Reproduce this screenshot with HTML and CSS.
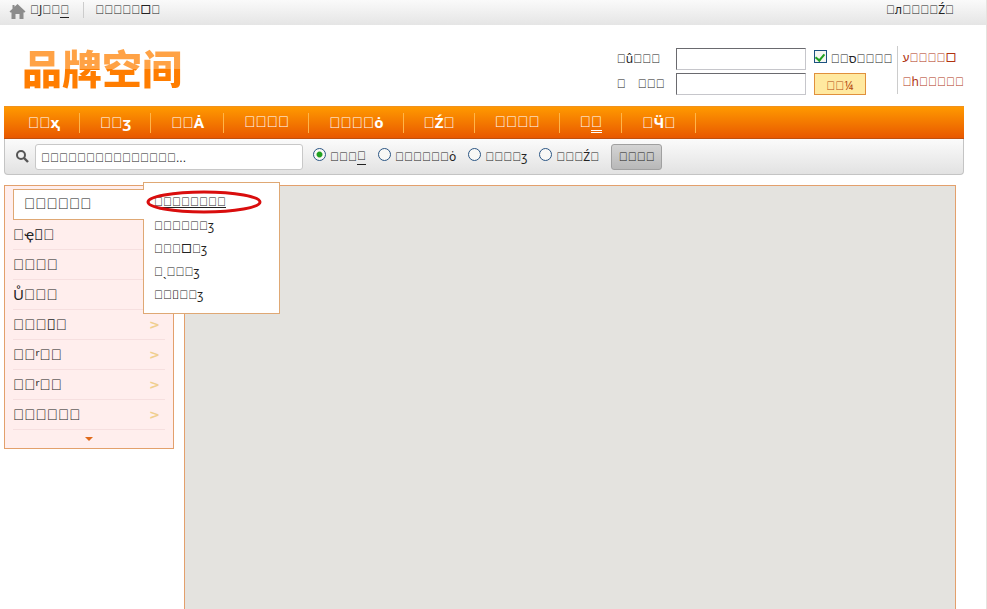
FILE: index.html
```
<!DOCTYPE html>
<html lang="en">
<head>
    <meta charset="UTF-8">
    <meta name="viewport" content="width=device-width, initial-scale=1.0">
    <title>品牌空间</title>
    <link rel="stylesheet" href="styles.css">
</head>
<body>
    <div class="topbar">
        <svg class="home" viewBox="0 0 16 15" aria-hidden="true">
            <path d="M8 0 16 7.5 15 8.5H14V15H10V10H6V15H2V8.5H1L0 7.5 3 4.7V1H5V2.8Z" fill="#8c8c8c"/>
        </svg>
        <a href="#" class="top-first">&#xE5E5;<span class="lt">J</span>&#xE5E5;&#xE5E5;<span class="low">&#xE5E5;</span></a>
        <a href="#">&#xE5E5;&#xE5E5;&#xE5E5;&#xE5E5;&#xE5E5;<span class="wide">□</span>&#xE5E5;</a>
        <a href="#" class="top-last">&#xE5E5;<span class="lt">л</span>&#xE5E5;&#xE5E5;&#xE5E5;&#xE5E5;<span class="lt">Ź</span>&#xE5E5;</a>
    </div>

    <header class="header">
        <h1 class="logo" lang="zh">品牌空间</h1>
        <form class="login">
            <label for="user">&#xE5E5;<span class="lt">û</span>&#xE5E5;&#xE5E5;&#xE5E5;</label>
            <input type="text" id="user" class="field">
            <div class="remember">
                <input type="checkbox" id="remember" class="check" checked>
                <label for="remember">&#xE5E5;&#xE5E5;<span class="lt">ס</span>&#xE5E5;&#xE5E5;&#xE5E5;&#xE5E5;</label>
            </div>
            <label for="pass" class="pass-label"><span>&#xE5E5;</span><span>&#xE5E5;&#xE5E5;&#xE5E5;</span></label>
            <input type="password" id="pass" class="field">
            <button type="button" class="login-btn">&#xE5E5;&#xE5E5;<span class="lt">¼</span></button>
        </form>
        <div class="account">
            <a href="#"><bdi class="lt">ע</bdi>&#xE5E5;&#xE5E5;&#xE5E5;&#xE5E5;<span class="wide">□</span></a>
            <a href="#">&#xE5E5;<span class="lt">һ</span>&#xE5E5;&#xE5E5;&#xE5E5;&#xE5E5;&#xE5E5;</a>
        </div>
    </header>

    <nav class="nav">
        <a href="#">&#xE5E5;&#xE5E5;<span class="lt">ҳ</span></a>
        <a href="#">&#xE5E5;&#xE5E5;<span class="lt">ӡ</span></a>
        <a href="#">&#xE5E5;&#xE5E5;<span class="lt">Ȧ</span></a>
        <a href="#">&#xE5E5;&#xE5E5;&#xE5E5;&#xE5E5;</a>
        <a href="#">&#xE5E5;&#xE5E5;&#xE5E5;&#xE5E5;<span class="lt">ȯ</span></a>
        <a href="#">&#xE5E5;<span class="lt">Ź</span>&#xE5E5;</a>
        <a href="#">&#xE5E5;&#xE5E5;&#xE5E5;&#xE5E5;</a>
        <a href="#">&#xE5E5;<span class="low double">&#xE5E5;</span></a>
        <a href="#">&#xE5E5;<span class="lt">Ӵ</span>&#xE5E5;</a>
    </nav>

    <form class="search">
        <svg class="glass" viewBox="0 0 13 13" aria-hidden="true">
            <circle cx="5" cy="5" r="4" fill="none" stroke="#555" stroke-width="2"/>
            <path d="M8 8 12 12" stroke="#555" stroke-width="2.4"/>
        </svg>
        <input type="text" class="keyword" aria-label="search" value="&#xE5E5;&#xE5E5;&#xE5E5;&#xE5E5;&#xE5E5;&#xE5E5;&#xE5E5;&#xE5E5;&#xE5E5;&#xE5E5;&#xE5E5;&#xE5E5;&#xE5E5;&#xE5E5;&#xE5E5;...">
        <label><input type="radio" name="type" class="radio" checked>&#xE5E5;&#xE5E5;&#xE5E5;<span class="low">&#xE5E5;</span></label>
        <label><input type="radio" name="type" class="radio">&#xE5E5;&#xE5E5;&#xE5E5;&#xE5E5;&#xE5E5;&#xE5E5;<span class="lt">ȯ</span></label>
        <label><input type="radio" name="type" class="radio">&#xE5E5;&#xE5E5;&#xE5E5;&#xE5E5;<span class="lt">ӡ</span></label>
        <label><input type="radio" name="type" class="radio">&#xE5E5;&#xE5E5;&#xE5E5;<span class="lt">Ź</span>&#xE5E5;</label>
        <button type="button" class="search-btn">&#xE5E5;&#xE5E5;&#xE5E5;&#xE5E5;</button>
    </form>

    <main class="main">
        <aside class="side">
            <ul class="cats">
                <li class="active">
                    <a href="#">&#xE5E5;&#xE5E5;&#xE5E5;&#xE5E5;&#xE5E5;&#xE5E5;</a>
                    <div class="flyout">
                        <a href="#" class="picked">&#xE5E5;&#xE5E5;&#xE5E5;&#xE5E5;&#xE5E5;&#xE5E5;&#xE5E5;&#xE5E5;</a>
                        <a href="#">&#xE5E5;&#xE5E5;&#xE5E5;&#xE5E5;&#xE5E5;&#xE5E5;<span class="lt">ӡ</span></a>
                        <a href="#">&#xE5E5;&#xE5E5;&#xE5E5;<span class="wide">□</span>&#xE5E5;<span class="lt">ӡ</span></a>
                        <a href="#">&#xE5E5;<span class="lt">ˎ</span>&#xE5E5;&#xE5E5;&#xE5E5;<span class="lt">ӡ</span></a>
                        <a href="#">&#xE5E5;&#xE5E5;<span class="lt">&#xE5E5;</span>&#xE5E5;&#xE5E5;<span class="lt">ӡ</span></a>
                        <svg class="ring" viewBox="0 0 116 24" aria-hidden="true">
                            <ellipse cx="58" cy="12" rx="56" ry="10" fill="none" stroke="#d90d0d" stroke-width="3"/>
                        </svg>
                    </div>
                </li>
                <li><a href="#">&#xE5E5;<span class="lt">ҿ&#xE5E5;</span>&#xE5E5;</a></li>
                <li><a href="#">&#xE5E5;&#xE5E5;&#xE5E5;&#xE5E5;</a></li>
                <li><a href="#"><span class="lt">Ů</span>&#xE5E5;&#xE5E5;&#xE5E5;</a></li>
                <li><a href="#">&#xE5E5;&#xE5E5;&#xE5E5;<span class="lt">&#xE5E5;</span>&#xE5E5;</a><span class="arrow">&gt;</span></li>
                <li><a href="#">&#xE5E5;&#xE5E5;<span class="lt">ʳ</span>&#xE5E5;&#xE5E5;</a><span class="arrow">&gt;</span></li>
                <li><a href="#">&#xE5E5;&#xE5E5;<span class="lt">ʳ</span>&#xE5E5;&#xE5E5;</a><span class="arrow">&gt;</span></li>
                <li><a href="#">&#xE5E5;&#xE5E5;&#xE5E5;&#xE5E5;&#xE5E5;&#xE5E5;</a><span class="arrow">&gt;</span></li>
            </ul>
            <button type="button" class="more" aria-label="more">
                <svg viewBox="0 0 8 4"><path d="M0 0H8L4 4Z" fill="#e06a1b"/></svg>
            </button>
        </aside>
        <section class="content"></section>
    </main>
</body>
</html>
```
FILE: styles.css
```
* {
  box-sizing: border-box;
}

body {
  margin: 0;
  height: 100vh;
  overflow: hidden;
  display: flex;
  flex-direction: column;
  background: #fff;
  border-right: 1px solid #e6e3df;
  color: #222;
  font: 12px/16px "Liberation Sans", sans-serif;
}

a {
  color: inherit;
  text-decoration: none;
}

input, button {
  margin: 0;
  font: inherit;
  color: inherit;
}

/* letters between the boxes */
.lt {
  font-family: "Noto Sans", sans-serif;
}

.wide {
  font-family: Inter, sans-serif;
}

.low {
  border-bottom: 1px solid;
}

.double {
  border-bottom: 3px double;
}

.topbar {
  display: flex;
  align-items: center;
  height: 25px;
  padding: 0 32px 6px 9px;
  background: linear-gradient(#fafafa, #e5e5e5);
}

.home {
  width: 17px;
  height: 15px;
  margin: 4px 4px 0 0;
}

.top-first {
  padding-right: 14px;
  margin-right: 11px;
  border-right: 1px solid #ccc;
}

.top-last {
  margin-left: auto;
}

.header {
  display: flex;
  align-items: flex-start;
  height: 81px;
  padding: 20px 22px 0 22px;
}

.logo {
  margin: 0;
  font: 900 40px/44px "Noto Sans CJK SC", sans-serif;
  background: linear-gradient(#ffa245 54%, #ff7d00 54%);
  -webkit-background-clip: text;
  background-clip: text;
  color: transparent;
}

.login {
  display: grid;
  grid-template-columns: 49px 128px auto;
  grid-auto-rows: 22px;
  align-items: center;
  gap: 3px 10px;
  margin: 3px 4px 0 auto;
}

.pass-label {
  display: flex;
  gap: 12px;
}

.field {
  width: 130px;
  height: 22px;
  padding: 0 4px;
  border: 1px solid #c6c6cb;
  border-top-color: #6a6a6f;
  border-left-color: #6a6a6f;
  background: #fff;
}

.remember {
  display: flex;
  gap: 4px;
  height: 16px;
  align-items: center;
}

.check {
  appearance: none;
  width: 13px;
  height: 13px;
  margin-bottom: 5px;
  border: 1px solid #1c5180;
  background: #f6f6f2;
}

.check:checked::before {
  content: "";
  display: block;
  width: 4px;
  height: 7px;
  margin: 1px auto;
  border: solid #21a121;
  border-width: 0 2px 2px 0;
  transform: rotate(40deg);
}

.login-btn {
  width: 52px;
  height: 22px;
  padding: 3px 0 0;
  border: 1px solid #e0903c;
  background: #ffe9a0;
  color: #b34a12;
}

.account {
  display: flex;
  flex-direction: column;
  gap: 8px;
  height: 48px;
  margin-top: 1px;
  padding: 4px 0 0 5px;
  border-left: 1px solid #ccc;
  color: #b0330f;
}

.nav {
  display: flex;
  align-items: center;
  flex: none;
  height: 33px;
  margin: 0 22px 0 4px;
  padding-left: 4px;
  border-top: 1px solid #f0921e;
  border-bottom: 1px solid #c0500f;
  background: linear-gradient(#ff9900, #e85800);
  color: #fff;
  font-size: 15px;
  font-weight: bold;
}

.nav a {
  height: 20px;
  padding: 0 19px 0 20px;
  border-right: 1px solid #ffb54a;
  line-height: 18px;
}

.search {
  display: flex;
  align-items: center;
  flex: none;
  height: 36px;
  margin: 0 22px 0 4px;
  padding-left: 11px;
  border: 1px solid #c4c4c4;
  border-top: 0;
  border-radius: 0 0 4px 4px;
  background: linear-gradient(#fbfbfb, #e2e2e2);
}

.glass {
  width: 13px;
  height: 13px;
  margin-right: 6px;
}

.keyword {
  width: 268px;
  height: 26px;
  margin-right: 10px;
  padding: 3px 5px 0;
  border: 1px solid #c8c8c8;
  border-radius: 3px;
  background: #fff;
}

.search label {
  display: flex;
  align-items: center;
  margin-right: 12px;
}

.radio {
  appearance: none;
  width: 13px;
  height: 13px;
  margin: 0 4px 4px 0;
  border: 1px solid #2a5584;
  border-radius: 50%;
  background: #f8f8f6;
}

.radio:checked {
  background: radial-gradient(#21a121 30%, #f8f8f6 45%);
}

.search-btn {
  width: 51px;
  height: 26px;
  padding: 0;
  border: 1px solid #a0a0a0;
  border-radius: 3px;
  background: linear-gradient(#d4d4d4, #b8b8b8);
}

.main {
  display: flex;
  align-items: flex-start;
  flex: 1;
  gap: 10px;
  margin: 10px 30px 0 4px;
}

.side {
  flex: none;
  width: 170px;
  padding: 3px 8px 0;
  border: 1px solid #e3a06c;
  background: #ffeeed;
}

.cats {
  margin: 0;
  padding: 0;
  list-style: none;
  font-size: 15px;
}

.cats li {
  display: flex;
  justify-content: space-between;
  align-items: center;
  height: 30px;
  padding-right: 5px;
  border-bottom: 1px solid #f6dfdf;
}

.cats .active {
  position: relative;
  height: 31px;
  padding: 0;
  border: 0;
}

.active > a {
  position: relative;
  z-index: 2;
  width: 131px;
  height: 31px;
  padding-left: 10px;
  border: 1px solid #dfa874;
  border-right: 0;
  background: #fff;
  line-height: 28px;
}

.arrow {
  color: #f0cf8f;
  font-family: "DejaVu Sans", sans-serif;
  font-size: 13px;
  font-weight: bold;
}

.more {
  display: block;
  width: 100%;
  height: 18px;
  padding: 0;
  border: 0;
  background: none;
}

.more svg {
  display: block;
  width: 8px;
  height: 4px;
  margin: 0 auto;
}

.flyout {
  position: absolute;
  top: -7px;
  left: 130px;
  z-index: 1;
  width: 137px;
  height: 132px;
  padding: 8px 10px;
  border: 1px solid #dfa874;
  background: #fff;
  font-size: 12px;
}

.flyout a {
  display: block;
  height: 23px;
  line-height: 23px;
}

.flyout .picked {
  text-decoration: underline;
}

.ring {
  position: absolute;
  top: 7px;
  left: 2px;
  width: 116px;
  height: 24px;
}

.content {
  flex: 1;
  align-self: stretch;
  border: 1px solid #e3a06c;
  border-bottom: 0;
  background: #e4e3df;
}
```
